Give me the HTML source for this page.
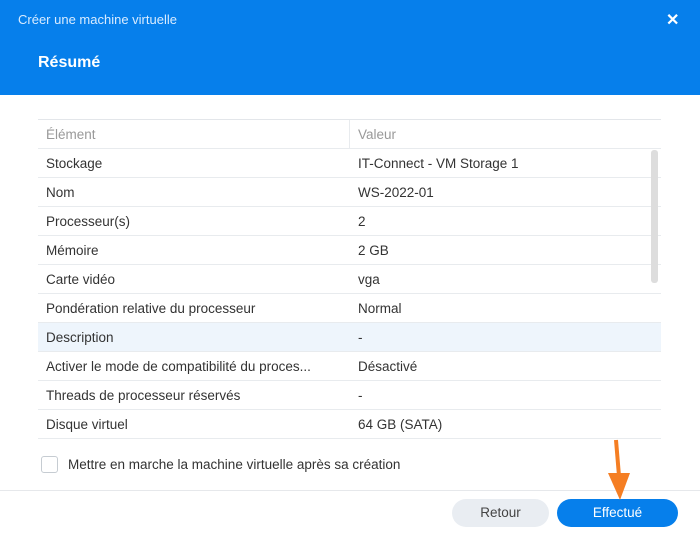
<!DOCTYPE html>
<html><head><meta charset="utf-8"><style>
*{margin:0;padding:0;box-sizing:border-box}
body{width:700px;height:537px;background:#fff;font-family:"Liberation Sans",sans-serif;position:relative;overflow:hidden;color:#333}
.hdr{position:absolute;left:0;top:0;width:700px;height:95px;background:#067feb;color:#fff}
.t1{position:absolute;left:18px;top:12px;font-size:13px;color:#d8ebff}
.x{position:absolute;left:666px;top:10px;font-size:16px;font-weight:bold}
.t2{position:absolute;left:38px;top:54px;font-size:16px;font-weight:bold}
.tbl{position:absolute;left:38px;top:119px;width:623px;border-top:1px solid #e3e6ea}
.row{height:29px;border-bottom:1px solid #e8ebee;position:relative;font-size:13.5px;line-height:29px}
.row span{position:absolute;left:8px}
.row b{position:absolute;left:320px;font-weight:normal}
.h{color:#999}
.h:after{content:"";position:absolute;left:311px;top:0;height:29px;border-left:1px solid #e8ebee}
.hl{background:#eef5fc}
.sb{position:absolute;left:651px;top:150px;width:7px;height:133px;background:#ddd;border-radius:3px}
.foot{position:absolute;left:0;top:490px;width:700px;border-top:1px solid #e6e8eb}
.cb{position:absolute;left:41px;top:456px;width:17px;height:17px;border:1px solid #c6ccd2;border-radius:3px}
.cbl{position:absolute;left:68px;top:457px;font-size:13.5px}
.btn{position:absolute;top:499px;height:28px;border-radius:14px;font-size:13.5px;text-align:center;line-height:28px}
</style></head><body>
<div class="hdr"><div class="t1">Créer une machine virtuelle</div><div class="x">✕</div><div class="t2">Résumé</div></div>
<div class="tbl">
<div class="row h"><span>Élément</span><b>Valeur</b></div>
<div class="row"><span>Stockage</span><b>IT-Connect - VM Storage 1</b></div>
<div class="row"><span>Nom</span><b>WS-2022-01</b></div>
<div class="row"><span>Processeur(s)</span><b>2</b></div>
<div class="row"><span>Mémoire</span><b>2 GB</b></div>
<div class="row"><span>Carte vidéo</span><b>vga</b></div>
<div class="row"><span>Pondération relative du processeur</span><b>Normal</b></div>
<div class="row hl"><span>Description</span><b>-</b></div>
<div class="row"><span>Activer le mode de compatibilité du proces...</span><b>Désactivé</b></div>
<div class="row"><span>Threads de processeur réservés</span><b>-</b></div>
<div class="row"><span>Disque virtuel</span><b>64 GB (SATA)</b></div>
</div>
<div class="sb"></div>
<div class="cb"></div><div class="cbl">Mettre en marche la machine virtuelle après sa création</div>
<div class="foot"></div>
<div class="btn" style="left:452px;width:97px;background:#e9edf2;color:#444">Retour</div>
<div class="btn" style="left:557px;width:121px;background:#067feb;color:#fff">Effectué</div>
<svg style="position:absolute;left:0;top:0" width="700" height="537"><line x1="616" y1="440" x2="619" y2="476" stroke="#f57e23" stroke-width="4"/><polygon points="608,473 630,473 620,500" fill="#f57e23"/></svg>
</body></html>
